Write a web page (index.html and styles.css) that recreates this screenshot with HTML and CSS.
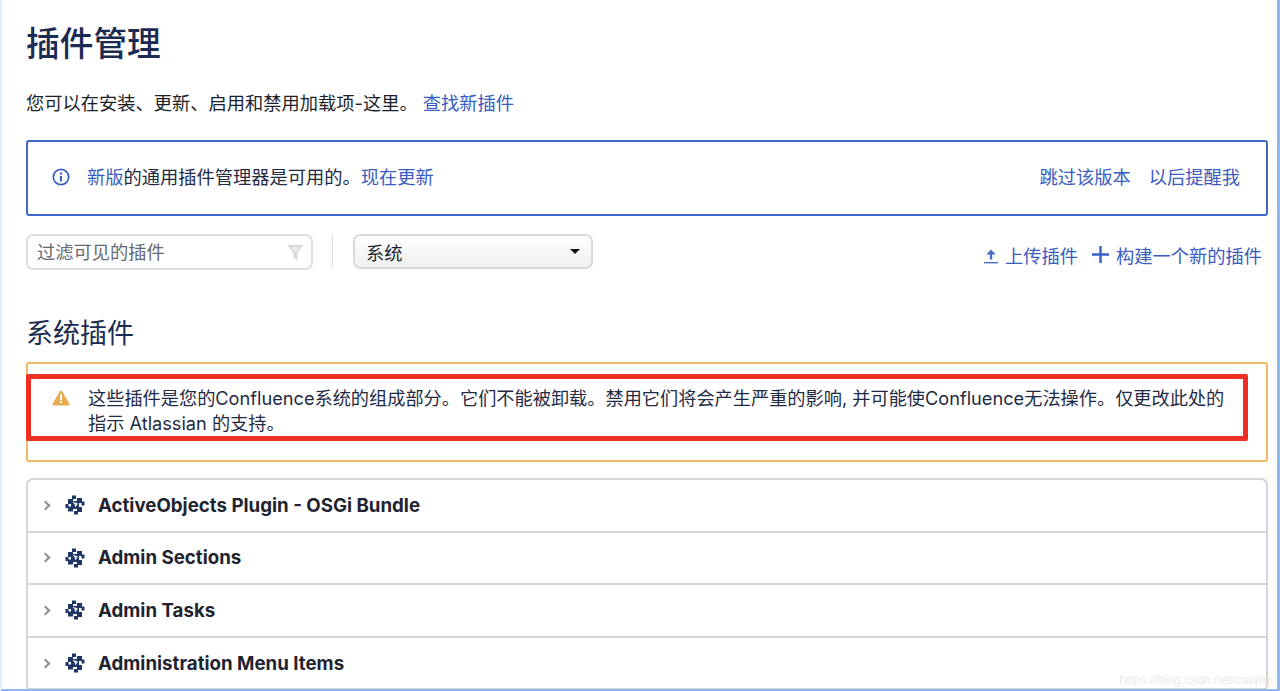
FILE: index.html
```html
<!DOCTYPE html>
<html lang="zh-CN">
<head>
<meta charset="utf-8">
<title>插件管理</title>
<link rel="stylesheet" href="styles.css">
</head>
<body>
<div class="frame">
  <main class="page">
    <h1 class="title">插件管理</h1>
    <p class="intro">您可以在安装、更新、启用和禁用加载项-这里。 <a class="link" href="#">查找新插件</a></p>

    <section class="notice">
      <svg class="notice-icon" viewBox="0 0 18 18" width="18" height="18" aria-hidden="true">
        <circle cx="9" cy="9" r="7.700" fill="none" stroke="#3a5fc4" stroke-width="1.700"/>
        <rect x="8" y="8" width="2" height="5.400" fill="#3a5fc4"/>
        <rect x="8" y="4.500" width="2" height="2" fill="#3a5fc4"/>
      </svg>
      <div class="notice-text"><a class="link" href="#">新版</a>的通用插件管理器是可用的。<a class="link" href="#">现在更新</a></div>
      <div class="notice-actions"><a class="link" href="#">跳过该版本</a><a class="link" href="#">以后提醒我</a></div>
    </section>

    <div class="toolbar">
      <div class="filter">
        <span class="filter-text">过滤可见的插件</span>
        <svg viewBox="0 0 17 17" width="17" height="17" aria-hidden="true"><path d="M.5 1h16L10.500 9v7.500L6.500 13.500V9z" fill="#d6d8da"/><path d="M4 3h9L9.500 8H7.500z" fill="#e9eaeb"/></svg>
      </div>
      <div class="divider"></div>
      <div class="select"><span>系统</span><i class="caret"></i></div>
      <div class="tools">
        <a class="link tool" href="#">
          <svg viewBox="0 0 14 16" width="14" height="16" aria-hidden="true"><path d="M7 1.500 2.200 6.500h3.600v5h2.400v-5h3.600z" fill="#4a6cc4"/><path d="M0 14h14v1.400H0z" fill="#4a6cc4"/></svg>
          上传插件</a>
        <a class="link tool" href="#">
          <svg class="plus" viewBox="0 0 17 17" width="17" height="17" aria-hidden="true"><path d="M7.300 0h2.400v7.300H17v2.400H9.700V17H7.300V9.700H0V7.300h7.300z" fill="#3a5fc4"/></svg>
          构建一个新的插件</a>
      </div>
    </div>

    <h2 class="section-title">系统插件</h2>

    <section class="warning">
      <svg class="warning-icon" viewBox="0 0 18 16" width="18" height="16" aria-hidden="true">
        <path d="M9 .8c.6 0 1 .3 1.300.8l7 12c.6 1-.1 2-1.200 2H1.900C.8 15.600.1 14.600.7 13.600l7-12C8 1.100 8.400.8 9 .8z" fill="#e8ac50"/>
        <rect x="8" y="4.500" width="2" height="5.500" fill="#fff"/>
        <rect x="8" y="11" width="2" height="2" fill="#fff"/>
      </svg>
      <p class="warning-text">这些插件是您的Confluence系统的组成部分。它们不能被卸载。禁用它们将会产生严重的影响, 并可能使Confluence无法操作。仅更改此处的指示 Atlassian 的支持。</p>
      <div class="highlight"></div>
    </section>

    <ul class="plugins">
      <li class="plugin"><i class="chevron"></i><svg class="puzzle" width="20" height="20" aria-hidden="true"><use href="#pz"/></svg><span>ActiveObjects Plugin - OSGi Bundle</span></li>
      <li class="plugin"><i class="chevron"></i><svg class="puzzle" width="20" height="20" aria-hidden="true"><use href="#pz"/></svg><span>Admin Sections</span></li>
      <li class="plugin"><i class="chevron"></i><svg class="puzzle" width="20" height="20" aria-hidden="true"><use href="#pz"/></svg><span>Admin Tasks</span></li>
      <li class="plugin"><i class="chevron"></i><svg class="puzzle" width="20" height="20" aria-hidden="true"><use href="#pz"/></svg><span>Administration Menu Items</span></li>
    </ul>
  </main>
  <span class="watermark">https://blog.csdn.net/caiqiiqi</span>
</div>
<svg class="defs" width="0" height="0" aria-hidden="true">
  <symbol id="pz" viewBox="0 0 20 20">
    <g fill="#1f3566">
      <rect x="7" y="0.500" width="4" height="3.500"/>
      <rect x="16.500" y="6.500" width="3" height="4"/>
      <rect x="9" y="16" width="4" height="3.500"/>
      <rect x="0.500" y="9" width="3" height="4"/>
      <rect x="3" y="4" width="5" height="5"/>
      <rect x="12" y="3" width="5" height="5"/>
      <rect x="12" y="12" width="5" height="5"/>
      <rect x="3" y="11.500" width="5" height="5"/>
      <rect x="6" y="6" width="8" height="8"/>
    </g>
    <path d="M7.500 6.500 13 8.500l-2.500 4-1-3z" fill="#dfe4ee"/>
  </symbol>
</svg>
</body>
</html>
```
FILE: styles.css
```css
* { box-sizing: border-box; }
html, body { margin: 0; height: 691px; overflow: hidden; background: #fff; }
body { font-family: Inter, "Noto Sans CJK SC", sans-serif; color: #1f2a44; }
.frame {
  position: relative;
  width: 1280px;
  height: 691px;
  overflow: hidden;
  border-left: 2px solid #e3effb;
  border-right: 3px solid #8fb8ee;
  border-bottom: 2px solid #8fb8ee;
}
.page { padding: 0 9px 0 24px; }
.link { color: #3a5cc0; text-decoration: none; }
.title { margin: 0; padding-top: 21px; font-size: 33.700px; line-height: 46px; font-weight: 500; color: #1c2b52; }
.intro { margin: 23px 0 0; font-size: 18.250px; line-height: 26px; color: #1b1f2a; }
.notice {
  display: flex;
  align-items: center;
  height: 76px;
  margin-top: 24px;
  padding: 0 26px 4px 24px;
  border: 2px solid #3f67c8;
  border-radius: 3px;
  font-size: 18.250px;
  color: #1f2a44;
}
.notice-icon { margin-right: 17px; flex: none; margin-top: 1px; }
.notice-text { flex: 1; }
.notice-actions { display: flex; gap: 18px; }
.toolbar { display: flex; align-items: flex-start; height: 36px; margin-top: 18px; }
.filter {
  display: flex;
  align-items: center;
  justify-content: space-between;
  width: 287px;
  height: 36px;
  padding: 0 7px 0 9px;
  border: 2px solid #dcdee0;
  border-radius: 7px;
  color: #666a72;
  font-size: 18.250px;
}
.filter-text { padding-bottom: 2px; }
.divider { width: 1px; height: 33px; margin: 0 20px 0 19px; background: #dcdde0; }
.select {
  display: flex;
  align-items: center;
  justify-content: space-between;
  width: 240px;
  height: 35px;
  padding: 0 11px 0 11px;
  border: 2px solid #d8dadc;
  border-radius: 7px;
  background: linear-gradient(#fff, #f0f0f2);
  font-size: 18.250px;
  color: #1b1f2a;
}
.caret { width: 0; height: 0; border: 5px solid transparent; border-top: 5px solid #111; border-bottom: 0; }
.tools { display: flex; gap: 14px; margin-left: auto; padding: 9px 6px 0 0; font-size: 18.250px; line-height: 26px; }
.tool { display: flex; align-items: center; gap: 7px; white-space: nowrap; }
.plus { margin-top: -4px; }
.section-title { margin: 0; padding-top: 45px; font-size: 27px; line-height: 38px; font-weight: 400; color: #1c2b52; }
.warning {
  position: relative;
  display: flex;
  height: 100px;
  margin-top: 9px;
  padding: 22px 24px 0 24px;
  border: 2px solid #f4ba68;
  border-radius: 3px;
}
.warning-icon { flex: none; margin: 4px 18px 0 0; }
.warning-text { margin: 0; width: 1142px; font-size: 18.200px; line-height: 25px; color: #1f2a44; }
.highlight {
  position: absolute;
  left: -2px;
  top: 10px;
  width: 1222px;
  height: 67px;
  border: 5px solid #ee2f24;
  border-radius: 2px;
}
.plugins {
  list-style: none;
  margin: 16px 0 0;
  padding: 0;
  border: 2px solid #d4d5d8;
  border-radius: 7px;
}
.plugin {
  display: flex;
  align-items: center;
  height: 52.600px;
  padding-left: 14px;
  border-bottom: 2px solid #d4d5d8;
  font-size: 18.700px;
  font-weight: 700;
  color: #1f2430;
}
.chevron {
  width: 7px;
  height: 7px;
  margin-right: 16px;
  border-top: 2px solid #8d8f94;
  border-right: 2px solid #8d8f94;
  transform: rotate(45deg);
}
.puzzle { margin-right: 13px; flex: none; }
.watermark {
  position: absolute;
  right: 4px;
  bottom: 2px;
  font-family: "Liberation Sans", sans-serif;
  font-size: 13px;
  letter-spacing: -0.200px;
  color: #ececec;
}
.defs { position: absolute; }
```
